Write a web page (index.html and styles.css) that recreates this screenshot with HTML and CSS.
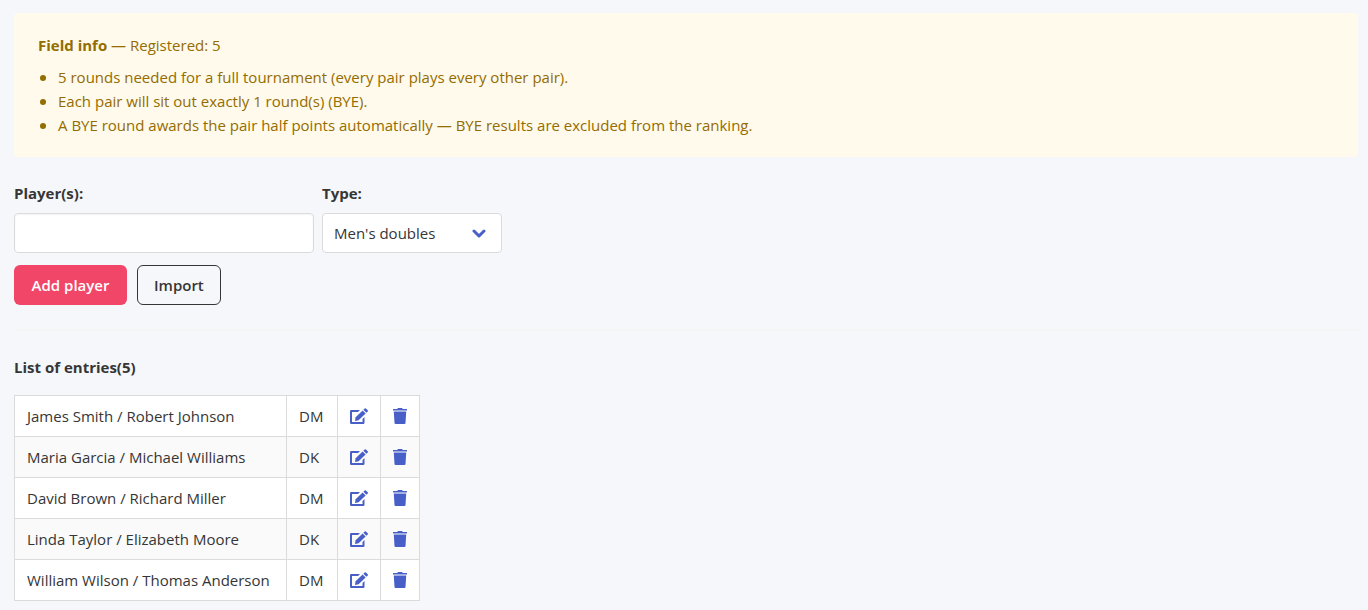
FILE: index.html
```html
<!DOCTYPE html>
<html lang="en">
<head>
<meta charset="utf-8">
<meta name="viewport" content="width=device-width, initial-scale=1">
<title>Tournament entries</title>
<link rel="stylesheet" href="styles.css">
</head>
<body>
<svg class="sprite" aria-hidden="true">
  <symbol id="edit" viewBox="0 0 18 16">
    <path d="M10 2H1.200Q0 2 0 3.200V14.800Q0 16 1.200 16H13.300Q14.500 16 14.500 14.800V9L12.500 11V14H2V4H8Z"/>
    <path d="M12.600 2.500L15.600 5.500L8.600 12.300L5 13L5.600 9.300Z"/>
    <path d="M13.400 1.700L14.700.4Q15.300 -.1 15.900.4L17.700 2.200Q18.200 2.800 17.700 3.400L16.400 4.700Z"/>
  </symbol>
  <symbol id="trash" viewBox="0 0 14 16">
    <path d="M0 1H4.200L5 0H9L9.800 1H14V2.600H0Z"/>
    <path d="M.8 3.400H13.200L12.500 15Q12.400 16 11.500 16H2.500Q1.600 16 1.500 15Z"/>
  </symbol>
</svg>
<main class="page">
  <section class="notification">
    <p><strong>Field info</strong> — Registered: 5</p>
    <ul class="notes">
      <li>5 rounds needed for a full tournament (every pair plays every other pair).</li>
      <li>Each pair will sit out exactly 1 round(s) (BYE).</li>
      <li>A BYE round awards the pair half points automatically — BYE results are excluded from the ranking.</li>
    </ul>
  </section>
  <form class="entry-form">
    <div class="fields">
      <div class="field field-player">
        <label class="label" for="player">Player(s):</label>
        <input class="control" id="player" type="text">
      </div>
      <div class="field field-type">
        <label class="label" for="type">Type:</label>
        <div class="select">
          <select class="control" id="type"><option>Men's doubles</option></select>
          <svg class="chevron" viewBox="0 0 14 10" aria-hidden="true"><path d="M2 2L7 7L12 2"/></svg>
        </div>
      </div>
    </div>
    <div class="buttons">
      <button class="button button-primary" type="button">Add player</button>
      <button class="button button-outline" type="button">Import</button>
    </div>
  </form>
  <hr class="divider">
  <h2 class="label">List of entries(5)</h2>
  <table class="entries">
    <colgroup>
      <col class="col-name">
      <col class="col-type">
      <col class="col-edit">
      <col class="col-delete">
    </colgroup>
    <tbody>
      <tr><td>James Smith / Robert Johnson</td><td>DM</td><td><a href="#" aria-label="Edit"><svg class="icon icon-edit"><use href="#edit"/></svg></a></td><td><a href="#" aria-label="Delete"><svg class="icon icon-trash"><use href="#trash"/></svg></a></td></tr>
      <tr><td>Maria Garcia / Michael Williams</td><td>DK</td><td><a href="#" aria-label="Edit"><svg class="icon icon-edit"><use href="#edit"/></svg></a></td><td><a href="#" aria-label="Delete"><svg class="icon icon-trash"><use href="#trash"/></svg></a></td></tr>
      <tr><td>David Brown / Richard Miller</td><td>DM</td><td><a href="#" aria-label="Edit"><svg class="icon icon-edit"><use href="#edit"/></svg></a></td><td><a href="#" aria-label="Delete"><svg class="icon icon-trash"><use href="#trash"/></svg></a></td></tr>
      <tr><td>Linda Taylor / Elizabeth Moore</td><td>DK</td><td><a href="#" aria-label="Edit"><svg class="icon icon-edit"><use href="#edit"/></svg></a></td><td><a href="#" aria-label="Delete"><svg class="icon icon-trash"><use href="#trash"/></svg></a></td></tr>
      <tr><td>William Wilson / Thomas Anderson</td><td>DM</td><td><a href="#" aria-label="Edit"><svg class="icon icon-edit"><use href="#edit"/></svg></a></td><td><a href="#" aria-label="Delete"><svg class="icon icon-trash"><use href="#trash"/></svg></a></td></tr>
    </tbody>
  </table>
</main>
</body>
</html>
```
FILE: styles.css
```css
*, *::before, *::after { box-sizing: border-box; }

body {
  margin: 0;
  background: #f5f7fb;
  color: #363636;
  font: 15px/24px "Segoe UI", "Open Sans", "Noto Sans", sans-serif;
}

.sprite { position: absolute; width: 0; height: 0; }

.page { padding: 13px 10px 9px 14px; }

p, ul, h2 { margin: 0; }

.notification {
  padding: 20px 40px 20px 24px;
  border-radius: 4px;
  background: #fffaeb;
  color: #946c00;
}

.notes { margin-top: 8px; padding-left: 2px; list-style: none; }
.notes li { display: flex; gap: 12px; }
.notes li::before {
  content: "";
  flex: none;
  width: 6px;
  height: 6px;
  margin-top: 10px;
  border-radius: 50%;
  background: currentColor;
}

.entry-form { margin-top: 24px; }

.fields { display: flex; flex-wrap: wrap; gap: 8px; }
.field-player { width: 300px; }
.field-type { width: 180px; }

.label {
  display: block;
  margin-bottom: 8px;
  font-size: 15px;
  font-weight: 700;
}

.control {
  display: block;
  width: 100%;
  height: 40px;
  padding: 0 11px;
  border: 1px solid #dbdbdb;
  border-radius: 4px;
  background: #fff;
  color: #363636;
  font: inherit;
}

input.control { box-shadow: inset 0 1px 2px rgba(10, 10, 10, 0.05); }

.select { position: relative; }
.select .control { appearance: none; padding-right: 40px; }
.chevron {
  position: absolute;
  top: 16px;
  right: 16px;
  width: 14px;
  height: 10px;
  fill: none;
  stroke: #485fc7;
  stroke-width: 3;
  stroke-linecap: round;
  stroke-linejoin: round;
  pointer-events: none;
}

.buttons { display: flex; gap: 10px; margin-top: 12px; }

.button {
  height: 40px;
  padding: 0 16px;
  border: 1px solid transparent;
  border-radius: 6px;
  font: inherit;
  font-weight: 600;
  cursor: pointer;
}

.button-primary { min-width: 113px; background: #f14668; color: #fff; }
.button-outline { border-color: #363636; background: transparent; color: #363636; }

.divider {
  height: 2px;
  margin: 24px 0;
  border: 0;
  background: #f5f5f5;
}

.entries {
  margin-top: 16px;
  border-collapse: collapse;
  background: #fff;
}

.col-name { width: 272px; }
.col-type { width: 51px; }
.col-edit { width: 43px; }
.col-delete { width: 39px; }

.entries td {
  height: 41px;
  padding: 8px 12px;
  border: 1px solid #dbdbdb;
  white-space: nowrap;
}

.entries tr:nth-child(even) { background: #fafafa; }

.entries a { display: block; color: #485fc7; }

.icon { display: block; height: 16px; fill: currentColor; }
.icon-edit { width: 18px; }
.icon-trash { width: 14px; }
```
